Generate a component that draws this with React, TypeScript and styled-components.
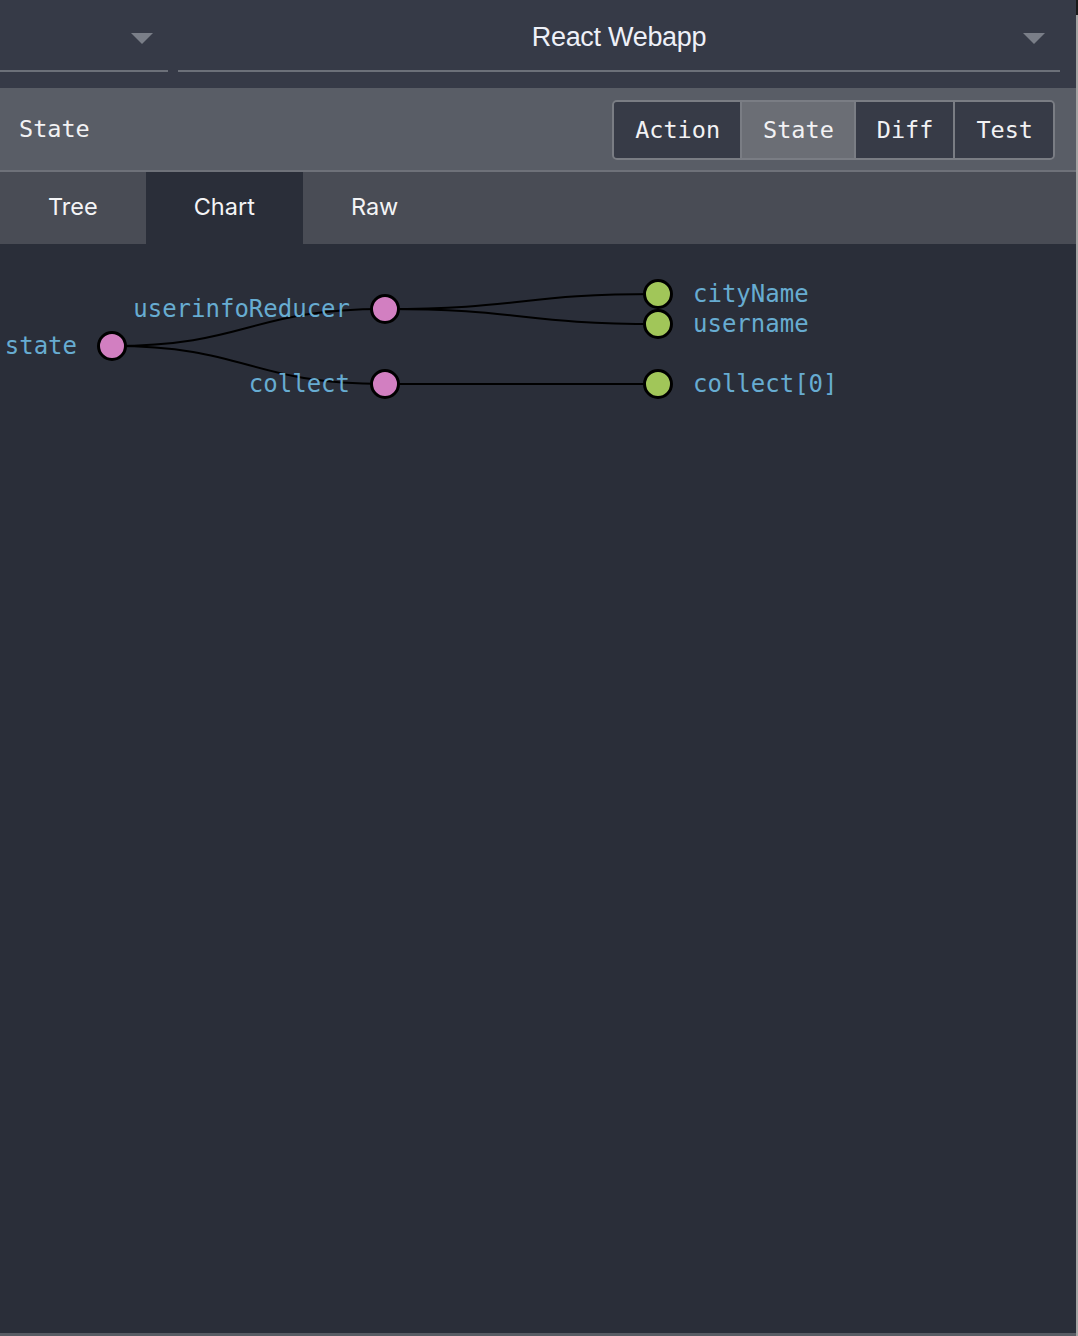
import React, { useState } from 'react';
import styled, { createGlobalStyle } from 'styled-components';

const GlobalStyle = createGlobalStyle`
  html, body {
    margin: 0;
    padding: 0;
    background: #2a2e39;
  }
  * {
    box-sizing: border-box;
  }
`;

const monitors = ['Action', 'State', 'Diff', 'Test'];
const tabs = ['Tree', 'Chart', 'Raw'];

type Node = { id: string; label: string; x: number; y: number; leaf: boolean };

const nodes: Node[] = [
  { id: 'state', label: 'state', x: 112, y: 102, leaf: false },
  { id: 'user', label: 'userinfoReducer', x: 385, y: 65, leaf: false },
  { id: 'collect', label: 'collect', x: 385, y: 140, leaf: false },
  { id: 'city', label: 'cityName', x: 658, y: 50, leaf: true },
  { id: 'name', label: 'username', x: 658, y: 80, leaf: true },
  { id: 'c0', label: 'collect[0]', x: 658, y: 140, leaf: true },
];

const links: [string, string][] = [
  ['state', 'user'],
  ['state', 'collect'],
  ['user', 'city'],
  ['user', 'name'],
  ['collect', 'c0'],
];

const byId = (id: string) => nodes.find((n) => n.id === id)!;

const App: React.FC = () => {
  const [monitor, setMonitor] = useState('State');
  const [tab, setTab] = useState('Chart');

  return (
    <Page>
      <GlobalStyle />
      <Main>
        <TopBar>
          <Picker width="168px">
            <Arrow />
          </Picker>
          <Picker width="882px">
            <PickerText>React Webapp</PickerText>
            <Arrow />
          </Picker>
        </TopBar>

        <Header>
          <HeaderTitle>State</HeaderTitle>
          <ButtonGroup>
            {monitors.map((m) => (
              <MonitorButton key={m} active={m === monitor} onClick={() => setMonitor(m)}>
                {m}
              </MonitorButton>
            ))}
          </ButtonGroup>
        </Header>

        <TabBar>
          {tabs.map((t) => (
            <Tab key={t} active={t === tab} onClick={() => setTab(t)}>
              {t}
            </Tab>
          ))}
        </TabBar>

        <ChartArea>
          <svg width="1076" height="300">
            {links.map(([a, b]) => {
              const s = byId(a);
              const t = byId(b);
              const mx = (s.x + t.x) / 2;
              return (
                <path
                  key={a + b}
                  d={`M${s.x},${s.y} C${mx},${s.y} ${mx},${t.y} ${t.x},${t.y}`}
                  fill="none"
                  stroke="#000"
                  strokeWidth={2}
                />
              );
            })}
            {nodes.map((n) => (
              <g key={n.id}>
                <text
                  x={n.leaf ? n.x + 35 : n.x - 35}
                  y={n.y + 8}
                  textAnchor={n.leaf ? 'start' : 'end'}
                  fill="#67acd1"
                  fontFamily="'DejaVu Sans Mono', monospace"
                  fontSize={24}
                >
                  {n.label}
                </text>
                <circle
                  cx={n.x}
                  cy={n.y}
                  r={13.5}
                  fill={n.leaf ? '#a1c659' : '#d27fc1'}
                  stroke="#000"
                  strokeWidth={3}
                />
              </g>
            ))}
          </svg>
        </ChartArea>
      </Main>
      <Scrollbar />
    </Page>
  );
};

export default App;

const Page = styled.div`
  display: flex;
  width: 1078px;
  height: 1336px;
  overflow: hidden;
`;

const Main = styled.div`
  flex: 1;
  display: flex;
  flex-direction: column;
  border-bottom: 3px solid #585c64;
`;

const Scrollbar = styled.div`
  width: 2px;
  background: linear-gradient(#1a1a1a 0 15px, #a4a4a4 15px);
`;

const TopBar = styled.div`
  height: 88px;
  background: #363a47;
  display: flex;
  gap: 10px;
  padding-top: 18px;
`;

const Picker = styled.div<{ width: string }>`
  position: relative;
  width: ${({ width }) => width};
  height: 54px;
  border-bottom: 2px solid #6c7079;
  display: flex;
  align-items: center;
  justify-content: center;
`;

const PickerText = styled.span`
  font-family: 'Liberation Sans', Arial, sans-serif;
  font-size: 27px;
  letter-spacing: -0.3px;
  color: #eef0f8;
  margin-top: -14px;
`;

const Arrow = styled.span`
  position: absolute;
  right: 15px;
  top: 15px;
  width: 0;
  height: 0;
  border-left: 11px solid transparent;
  border-right: 11px solid transparent;
  border-top: 11px solid #7a7e88;
`;

const Header = styled.div`
  height: 84px;
  background: #595d66;
  border-bottom: 2px solid #6e7179;
  display: flex;
  align-items: center;
  justify-content: space-between;
  padding: 0 21px 0 19px;
`;

const HeaderTitle = styled.span`
  font-family: 'DejaVu Sans Mono', monospace;
  font-size: 23.5px;
  color: #f2f2f4;
`;

const ButtonGroup = styled.div`
  display: flex;
  height: 60px;
  border: 2px solid #7a7d84;
  border-radius: 5px;
  overflow: hidden;
  margin-top: 1px;
`;

const MonitorButton = styled.button<{ active: boolean }>`
  font-family: 'DejaVu Sans Mono', monospace;
  font-size: 23.5px;
  color: #f2f2f4;
  background: ${({ active }) => (active ? '#6b6e75' : '#373b47')};
  border: none;
  border-left: 2px solid #7a7d84;
  padding: 0 20px 0 21px;
  cursor: pointer;
  &:first-child {
    border-left: none;
  }
`;

const TabBar = styled.div`
  height: 72px;
  background: #494c55;
  display: flex;
`;

const Tab = styled.div<{ active: boolean }>`
  display: flex;
  align-items: center;
  padding: 0 48px 4px;
  font-family: Inter, 'Noto Sans', sans-serif;
  font-size: 23.5px;
  color: #f4f4f6;
  background: ${({ active }) => (active ? '#2a2e39' : 'transparent')};
  cursor: pointer;
`;

const ChartArea = styled.div`
  flex: 1;
  background: #2a2e39;
`;
